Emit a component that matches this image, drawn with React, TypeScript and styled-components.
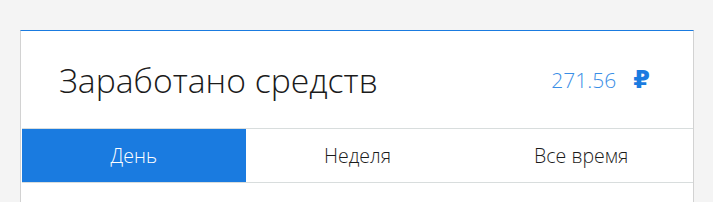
import styled, { createGlobalStyle } from 'styled-components'
import { useState } from 'react'

const Global = createGlobalStyle`
  body {
    margin: 0;
    background: #f4f4f4;
    font-family: "Open Sans", "Liberation Sans", sans-serif;
  }
`

const Page = styled.div`
  padding: 30px 19px 0 20px;
  height: 202px;
  box-sizing: border-box;
  overflow: hidden;
`

const Card = styled.section`
  background: #fff;
  border-top: 1px solid #1a7be0;
  border-left: 1px solid #d2d2d2;
  border-right: 1px solid #d2d2d2;
  padding-left: 1px;
  height: 200px;
`

const Header = styled.header`
  display: flex;
  align-items: center;
  justify-content: space-between;
  height: 97px;
  padding: 0 43px 0 37px;
  border-bottom: 1px solid #d8dddd;
`

const Title = styled.h2`
  margin: 0;
  font-weight: 300;
  font-size: 33.7px;
  color: #1b1b1b;
`

const Amount = styled.div`
  display: flex;
  align-items: center;
  gap: 17px;
  color: #3a8ee6;
  font-size: 21px;
  font-weight: 300;
`

const Ruble = styled.span`
  color: #1a7be0;
  font-weight: 700;
  font-size: 24px;
  font-family: "DejaVu Sans", sans-serif;
`

const Tabs = styled.nav`
  display: grid;
  grid-template-columns: repeat(3, 1fr);
  border-bottom: 1px solid #d8dddd;
`

const Tab = styled.button<{ $active?: boolean }>`
  height: 53px;
  border: 0;
  margin: 0;
  padding: 0;
  font-family: inherit;
  font-size: 19.5px;
  font-weight: 300;
  cursor: pointer;
  background: ${p => (p.$active ? '#1a7be0' : '#fff')};
  color: ${p => (p.$active ? '#fff' : '#1b1b1b')};
`

const tabs = ['День', 'Неделя', 'Все время']

export default function App() {
  const [active, setActive] = useState(0)
  return (
    <>
      <Global />
      <Page>
        <Card>
          <Header>
            <Title>Заработано средств</Title>
            <Amount>
              271.56 <Ruble>₽</Ruble>
            </Amount>
          </Header>
          <Tabs>
            {tabs.map((t, i) => (
              <Tab key={t} $active={i === active} onClick={() => setActive(i)}>
                {t}
              </Tab>
            ))}
          </Tabs>
        </Card>
      </Page>
    </>
  )
}
